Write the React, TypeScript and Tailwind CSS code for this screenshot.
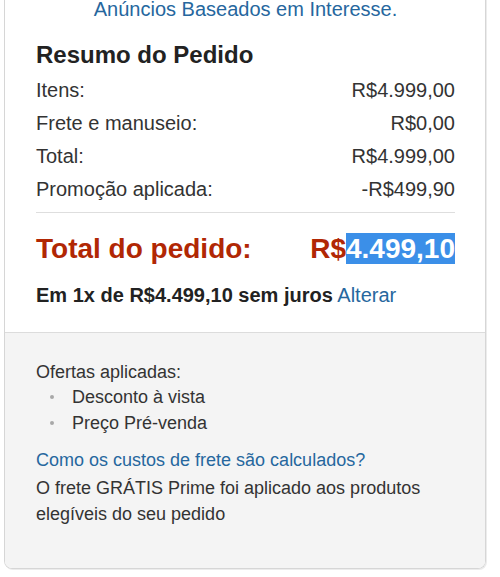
export default function App() {
  const rows: [string, string][] = [
    ["Itens:", "R$4.999,00"],
    ["Frete e manuseio:", "R$0,00"],
    ["Total:", "R$4.999,00"],
    ["Promoção aplicada:", "-R$499,90"],
  ];
  return (
    <div
      className="w-[500px] h-[577px] overflow-hidden bg-white"
      style={{ fontFamily: '"Liberation Sans", Arial, sans-serif' }}
    >
      <div className="ml-[4px] w-[482px] -mt-[3px] border border-t-0 border-[#d6d6d6] rounded-b-[8px] overflow-hidden shadow-[1px_1px_0_#ececec]">
        <div className="pl-[31px] pr-[30px] pb-[24px] bg-white">
          <div className="text-center text-[20px] leading-[24px] text-[#26679e]">
            Anúncios Baseados em Interesse.
          </div>
          <div className="mt-[19px] text-[24px] leading-[30px] font-bold text-[#222]">
            Resumo do Pedido
          </div>
          <div className="mt-[4px]">
            {rows.map(([l, v]) => (
              <div
                key={l}
                className="flex justify-between text-[20px] leading-[33px] text-[#333]"
              >
                <span>{l}</span>
                <span>{v}</span>
              </div>
            ))}
          </div>
          <div className="mt-[6px] h-px bg-[#dedede]" />
          <div className="mt-[18px] flex justify-between text-[28px] leading-[36px] font-bold text-[#B12704]">
            <span>Total do pedido:</span>
            <span>
              R$<span className="bg-[#3b8fe8] text-white">4.499,10</span>
            </span>
          </div>
          <div className="mt-[15px] text-[20px] leading-[26px] text-[#222]">
            <span className="font-bold">Em 1x de R$4.499,10 sem juros</span>{" "}
            <span className="text-[#26679e]">Alterar</span>
          </div>
        </div>
        <div className="border-t border-[#dcdcdc] bg-[#f4f4f4] pl-[31px] pr-[30px] pt-[28px] pb-[41px] text-[18px] text-[#333]">
          <div className="leading-[23px]">Ofertas aplicadas:</div>
          <ul>
            {["Desconto à vista", "Preço Pré-venda"].map((t) => (
              <li key={t} className="flex items-center leading-[26px]">
                <span className="ml-[14px] w-[4px] h-[4px] rounded-full bg-[#a8a8a8]" />
                <span className="ml-[18px]">{t}</span>
              </li>
            ))}
          </ul>
          <div className="mt-[11px] leading-[26px] text-[#26679e]">
            Como os custos de frete são calculados?
          </div>
          <div className="mt-[2px] leading-[26px]">
            O frete GRÁTIS Prime foi aplicado aos produtos
            <br />
            elegíveis do seu pedido
          </div>
        </div>
      </div>
    </div>
  );
}
